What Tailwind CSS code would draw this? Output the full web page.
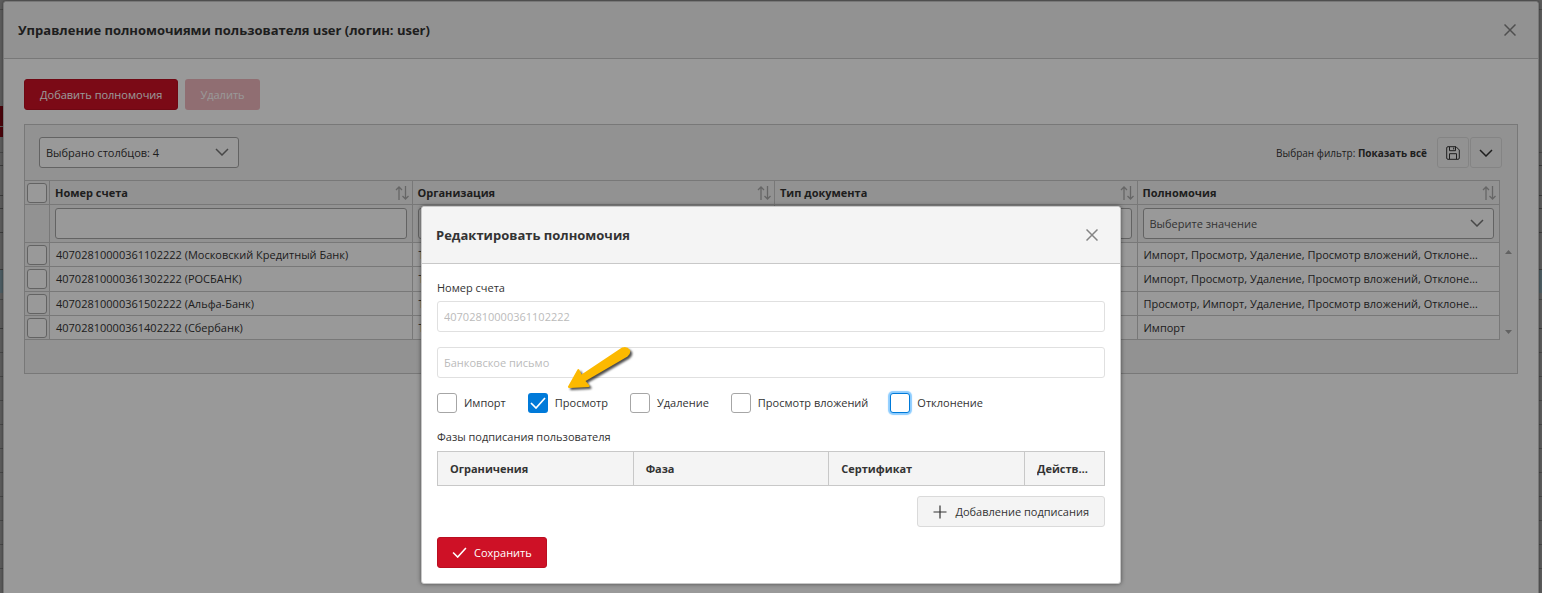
<!DOCTYPE html>
<html lang="ru">
<head>
<meta charset="utf-8">
<title>Управление полномочиями</title>
<script src="https://cdn.jsdelivr.net/npm/@tailwindcss/browser@4"></script>
</head>
<body class="relative h-screen overflow-hidden bg-[#999] font-['Open_Sans','Noto_Sans',sans-serif] text-[11px] leading-4 text-[#333]">

<svg class="hidden" aria-hidden="true">
  <symbol id="chev" viewBox="0 0 14 8"><path d="M1 1l6 6 6-6" fill="none" stroke="currentColor" stroke-width="1.5"/></symbol>
  <symbol id="sort" viewBox="0 0 14 14"><path d="M4 14V1M1 4l3-3 3 3M10.500 0v13M7.500 10l3 3 3-3" fill="none" stroke="currentColor" stroke-width="1.300"/></symbol>
  <symbol id="close" viewBox="0 0 12 12"><path d="M.5.5l11 11M11.500.5l-11 11" fill="none" stroke="currentColor" stroke-width="1.500"/></symbol>
  <symbol id="tick" viewBox="0 0 16 12"><path d="M1 6l5 5L15 1" fill="none" stroke="currentColor" stroke-width="1.700"/></symbol>
</svg>

<!-- Page behind both dialogs -->
<div class="absolute inset-0 flex flex-col" aria-hidden="true">
  <div class="h-[10px] border-b border-[#777]"></div>
  <div class="h-[96px]"></div>
  <div class="h-[20px] w-[3px] bg-[#7d0712]"></div>
  <div class="h-[11px] w-[3px] border-t border-[#999] bg-[#7d0712]"></div>
  <div class="h-[16px] border-b border-[#777]"></div>
  <div class="h-[13px] border-b border-[#666]"></div>
  <div class="h-[30px] border-b border-[#666]"></div>
  <div class="h-[13px] border-b border-[#666]"></div>
  <div class="h-[24px] border-b border-[#666]"></div>
  <div class="h-[37px] border-b border-[#666]"></div>
  <div class="h-[23px] bg-[#7f9aa5]"></div>
  <div class="h-[7px] border-b border-[#777]"></div>
  <div class="h-[29px] border-b border-[#666]"></div>
  <div class="h-[24px] border-b border-[#777]"></div>
  <div class="h-[24px] border-b border-[#777]"></div>
  <div class="h-[24px] border-b border-[#777]"></div>
  <div class="h-[24px] border-b border-[#777]"></div>
  <div class="h-[24px] border-b border-[#777]"></div>
  <div class="h-[24px] border-b border-[#777]"></div>
  <div class="h-[24px] border-b border-[#777]"></div>
  <div class="h-[24px] border-b border-[#777]"></div>
  <div class="h-[24px] border-b border-[#777]"></div>
  <div class="h-[24px] border-b border-[#777]"></div>
</div>

<!-- Permissions dialog -->
<section class="absolute inset-x-[3px] top-px min-h-full rounded-t-[3px] border border-[#c8c8c8] bg-white shadow-[0_0_3px_rgba(0,0,0,0.4)]">
  <header class="flex h-[57px] items-center justify-between rounded-t-[3px] border-b border-[#c8c8c8] bg-[#f4f4f4] pr-[22px] pl-[14px]">
    <h1 class="text-[13px] font-bold">Управление полномочиями пользователя user (логин: user)</h1>
    <button type="button" aria-label="Закрыть" class="text-[#848484]"><svg class="size-3"><use href="#close"/></svg></button>
  </header>
  <div class="px-5 pt-5">
    <div class="flex gap-[7px]">
      <button type="button" class="h-[31px] rounded-[3px] border border-[#ba0e20] bg-[#ce1126] px-[15px] text-white">Добавить полномочия</button>
      <button type="button" disabled class="h-[31px] rounded-[3px] bg-[#f1b8be] px-[15px] text-white">Удалить</button>
    </div>

    <div class="mt-[14px] border border-[#c8c8c8] bg-[#f4f4f4] pb-[33px]">
      <div class="flex h-[55px] items-center justify-between pr-[15px] pl-[14px]">
        <div class="relative w-[200px]">
          <select aria-label="Столбцы" class="h-[31px] w-full appearance-none rounded-[3px] border border-[#a6a6a6] bg-white pl-[6px]"><option>Выбрано столбцов: 4</option></select>
          <svg class="pointer-events-none absolute top-[11px] right-[10px] h-2 w-[14px] text-[#777]"><use href="#chev"/></svg>
        </div>
        <div class="flex items-center text-[#333]">
          <span class="mr-[10px] text-[10px]">Выбран фильтр: <b>Показать всё</b></span>
          <button type="button" aria-label="Сохранить фильтр" class="mr-px flex h-[31px] w-8 items-center justify-center rounded-[3px] border border-[#ddd]">
            <svg class="size-[14px]" viewBox="0 0 14 14" fill="none" stroke="currentColor" stroke-width="1"><path d="M2 .7h8l3.300 3.300v8a1.300 1.300 0 0 1-1.300 1.300H2A1.300 1.300 0 0 1 .7 12V2A1.300 1.300 0 0 1 2 .7zM3.500 1v3.700h6V1M7.700 1.500v2M3.500 13V7.700h7V13"/></svg>
          </button>
          <button type="button" aria-label="Выбрать фильтр" class="flex h-[31px] w-8 items-center justify-center rounded-[3px] border border-[#ddd]"><svg class="h-2 w-[14px]"><use href="#chev"/></svg></button>
        </div>
      </div>

      <div class="flex">
        <div class="min-w-0 flex-1">
        <table class="w-full table-fixed border-separate border-spacing-0 border-t border-[#c8c8c8] [&_td]:border-r [&_td]:border-b [&_td]:border-[#c8c8c8] [&_th]:border-r [&_th]:border-b [&_th]:border-[#c8c8c8]">
          <colgroup><col class="w-[25px]"><col><col><col><col></colgroup>
          <thead>
            <tr class="h-6 text-left">
              <th class="p-0 pl-[2px]"><input type="checkbox" aria-label="Выбрать все" class="block size-5 appearance-none rounded-[3px] border border-[#a6a6a6] bg-white"></th>
              <th class="p-0 pr-[3px] pl-[5px] font-bold"><div class="flex items-center justify-between">Номер счета<svg class="size-[14px] text-[#aaa]"><use href="#sort"/></svg></div></th>
              <th class="p-0 pr-[3px] pl-[5px] font-bold"><div class="flex items-center justify-between">Организация<svg class="size-[14px] text-[#aaa]"><use href="#sort"/></svg></div></th>
              <th class="p-0 pr-[3px] pl-[5px] font-bold"><div class="flex items-center justify-between">Тип документа<svg class="size-[14px] text-[#aaa]"><use href="#sort"/></svg></div></th>
              <th class="p-0 pr-[3px] pl-[5px] font-bold"><div class="flex items-center justify-between">Полномочия<svg class="size-[14px] text-[#aaa]"><use href="#sort"/></svg></div></th>
            </tr>
            <tr class="h-[38px]">
              <td class="p-0"></td>
              <td class="p-0 px-[5px]"><input type="text" aria-label="Фильтр по номеру счета" class="block h-[31px] w-full rounded-[3px] border border-[#a6a6a6] bg-white px-[6px]"></td>
              <td class="p-0 px-[5px]"><input type="text" aria-label="Фильтр по организации" class="block h-[31px] w-full rounded-[3px] border border-[#a6a6a6] bg-white px-[6px]"></td>
              <td class="p-0 px-[5px]"><input type="text" aria-label="Фильтр по типу документа" class="block h-[31px] w-full rounded-[3px] border border-[#a6a6a6] bg-white px-[6px]"></td>
              <td class="p-0 px-[5px]">
                <div class="relative">
                  <select aria-label="Фильтр по полномочиям" class="block h-[31px] w-full appearance-none rounded-[3px] border border-[#a6a6a6] bg-white pl-[6px] text-[#555]"><option>Выберите значение</option></select>
                  <svg class="pointer-events-none absolute top-[11px] right-[10px] h-2 w-[14px] text-[#777]"><use href="#chev"/></svg>
                </div>
              </td>
            </tr>
          </thead>
          <tbody class="bg-white">
            <tr class="h-6">
              <td class="bg-[#f4f4f4] p-0 pl-[2px]"><input type="checkbox" aria-label="Выбрать строку 1" class="block size-5 appearance-none rounded-[3px] border border-[#a6a6a6] bg-white"></td>
              <td class="truncate p-0 px-[6px]">40702810000361102222 (Московский Кредитный Банк)</td><td class="p-0 px-[6px]">Т</td><td></td>
              <td class="truncate p-0 pr-4 pl-[6px]">Импорт, Просмотр, Удаление, Просмотр вложений, Отклонение</td>
            </tr>
            <tr class="h-[25px]">
              <td class="bg-[#f4f4f4] p-0 pl-[2px]"><input type="checkbox" aria-label="Выбрать строку 2" class="block size-5 appearance-none rounded-[3px] border border-[#a6a6a6] bg-white"></td>
              <td class="truncate p-0 px-[6px]">40702810000361302222 (РОСБАНК)</td><td class="p-0 px-[6px]">Т</td><td></td>
              <td class="truncate p-0 pr-4 pl-[6px]">Импорт, Просмотр, Удаление, Просмотр вложений, Отклонение</td>
            </tr>
            <tr class="h-6">
              <td class="bg-[#f4f4f4] p-0 pl-[2px]"><input type="checkbox" aria-label="Выбрать строку 3" class="block size-5 appearance-none rounded-[3px] border border-[#a6a6a6] bg-white"></td>
              <td class="truncate p-0 px-[6px]">40702810000361502222 (Альфа-Банк)</td><td class="p-0 px-[6px]">Т</td><td></td>
              <td class="truncate p-0 pr-4 pl-[6px]">Просмотр, Импорт, Удаление, Просмотр вложений, Отклонение</td>
            </tr>
            <tr class="h-6">
              <td class="bg-[#f4f4f4] p-0 pl-[2px]"><input type="checkbox" aria-label="Выбрать строку 4" class="block size-5 appearance-none rounded-[3px] border border-[#a6a6a6] bg-white"></td>
              <td class="truncate p-0 px-[6px]">40702810000361402222 (Сбербанк)</td><td class="p-0 px-[6px]">Т</td><td></td>
              <td class="truncate p-0 pr-4 pl-[6px]">Импорт</td>
            </tr>
          </tbody>
        </table>
        </div>
        <div class="flex w-[17px] flex-col items-center justify-between pt-[70px] pb-[6px]" aria-hidden="true">
          <svg class="h-1 w-[7px]" viewBox="0 0 7 4"><path d="M0 4L3.500 0 7 4z" fill="#a3a3a3"/></svg>
          <svg class="h-1 w-[7px]" viewBox="0 0 7 4"><path d="M0 0l3.500 4L7 0z" fill="#a3a3a3"/></svg>
        </div>
      </div>
    </div>
  </div>
</section>

<!-- Edit dialog over the dimmed page -->
<div class="absolute inset-0 flex items-start justify-center bg-black/40 pt-[206px]">
  <section role="dialog" aria-labelledby="edit-title" class="relative w-[700px] rounded-[3px] border border-[#c8c8c8] bg-white shadow-[0_0_4px_rgba(0,0,0,0.5)]">
    <header class="flex h-[57px] items-center justify-between rounded-t-[3px] border-b border-[#c8c8c8] bg-[#f4f4f4] pr-[22px] pl-[14px]">
      <h2 id="edit-title" class="text-[13px] font-bold">Редактировать полномочия</h2>
      <button type="button" aria-label="Закрыть" class="text-[#848484]"><svg class="size-3"><use href="#close"/></svg></button>
    </header>
    <form class="px-[15px] pt-4 pb-[15px]">
      <label for="acc" class="block">Номер счета</label>
      <input id="acc" type="text" disabled value="40702810000361102222" class="mt-[5px] block h-[31px] w-full rounded-[3px] border border-[#e0e0e0] bg-white px-[6px] text-[#bbb]">
      <input type="text" disabled aria-label="Тип документа" value="Банковское письмо" class="mt-[15px] block h-[31px] w-full rounded-[3px] border border-[#e0e0e0] bg-white px-[6px] text-[#bbb]">

      <div class="mt-[15px] flex gap-[22px]">
        <label class="flex items-center gap-[7px]"><input type="checkbox" class="size-5 appearance-none rounded-[3px] border border-[#a6a6a6] bg-white">Импорт</label>
        <label class="relative flex items-center gap-[7px]"><input type="checkbox" checked class="size-5 appearance-none rounded-[3px] bg-[#007ad9]"><svg class="pointer-events-none absolute top-1 left-[2px] h-3 w-4 text-white"><use href="#tick"/></svg>Просмотр</label>
        <label class="flex items-center gap-[7px]"><input type="checkbox" class="size-5 appearance-none rounded-[3px] border border-[#a6a6a6] bg-white">Удаление</label>
        <label class="flex items-center gap-[7px]"><input type="checkbox" class="size-5 appearance-none rounded-[3px] border border-[#a6a6a6] bg-white">Просмотр вложений</label>
        <label class="flex items-center gap-[7px]"><input type="checkbox" class="size-5 appearance-none rounded-[3px] border border-[#007ad9] bg-white shadow-[0_0_1px_2px_#8dcdff]">Отклонение</label>
      </div>

      <p class="mt-4">Фазы подписания пользователя</p>
      <table class="mt-[6px] w-full table-fixed border-collapse text-left">
        <colgroup><col><col><col><col class="w-[80px]"></colgroup>
        <thead>
          <tr class="h-[34px] bg-[#f4f4f4] [&>th]:border [&>th]:border-[#c8c8c8] [&>th]:px-3 [&>th]:py-0 [&>th]:font-bold">
            <th>Ограничения</th><th>Фаза</th><th>Сертификат</th><th><div class="w-[54px] truncate">Действия</div></th>
          </tr>
        </thead>
      </table>
      <div class="mt-[10px] flex justify-end">
        <button type="button" class="flex h-[31px] items-center gap-2 rounded-[3px] border border-[#dadada] bg-[#f4f4f4] px-[15px]">
          <svg class="size-[14px]" viewBox="0 0 14 14"><path d="M7 .5v13M.5 7h13" fill="none" stroke="currentColor" stroke-width="1.200"/></svg>Добавление подписания
        </button>
      </div>
      <button type="submit" class="mt-[10px] flex h-[31px] items-center gap-[7px] rounded-[3px] border border-[#ba0e20] bg-[#ce1126] px-[14px] text-white">
        <svg class="h-[11px] w-[15px]"><use href="#tick"/></svg>Сохранить
      </button>
    </form>

    <!-- Pointer to the "Просмотр" option -->
    <svg class="pointer-events-none absolute top-[134px] left-[140px] h-[54px] w-[76px] drop-shadow-[2px_2px_1px_rgba(0,0,0,0.7)]" viewBox="0 0 76 54" aria-hidden="true">
      <path d="M6 45.500L15.500 28.500Q16.500 27.500 17.500 29L19.500 33.500L60 6.500Q65 4.500 68 9Q69 13 65.500 15.500L23.500 40L27.500 44.500Q28 45.500 26.500 46L7.500 47Q5.500 47 6 45.500z" fill="#fcb900"/>
    </svg>
  </section>
</div>
</body>
</html>
